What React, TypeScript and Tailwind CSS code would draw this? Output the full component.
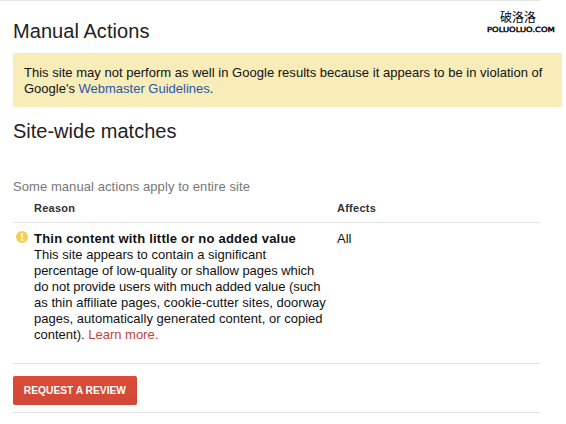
import React from 'react';

const reasonLines = [
  { text: 'This site appears to contain a significant', className: 'tracking-[0.02px]' },
  { text: 'percentage of low-quality or shallow pages which', className: 'tracking-[-0.05px]' },
  { text: 'do not provide users with much added value (such', className: 'tracking-[-0.07px]' },
  { text: 'as thin affiliate pages, cookie-cutter sites, doorway', className: 'tracking-[0.03px]' },
  { text: 'pages, automatically generated content, or copied', className: 'tracking-[0.02px]' },
];

const WarningIcon: React.FC = () => (
  <svg className="mt-[8px] ml-[3px] block h-3 w-3" viewBox="0 0 12 12">
    <circle cx="6" cy="6" r="6" fill="#f9ce55" />
    <path d="M5 2h2v5H5zM5 8h2v2H5z" fill="#fff8e0" />
  </svg>
);

const Watermark: React.FC = () => (
  <div className="absolute top-[10px] left-[487px] w-[71px] text-black">
    <div className="pl-[13px] font-['Noto_Sans_CJK_SC',sans-serif] text-[12px] leading-[14px] whitespace-nowrap">
      破洛洛
    </div>
    <div className="mt-px origin-left scale-x-[1.2] font-['DejaVu_Sans',sans-serif] text-[7px] leading-[10px] font-normal whitespace-nowrap [-webkit-text-stroke:0.4px_black]">
      POLUOLUO.COM
    </div>
  </div>
);

const App: React.FC = () => {
  return (
    <div className="relative h-[424px] w-[566px] overflow-hidden bg-white font-['Liberation_Sans',Arial,sans-serif] text-[13px] leading-4 text-[#111]">
      <div className="h-px w-[540px] bg-[#e5e5e5]" />
      <Watermark />

      <main className="pl-[13px]">
        <h1 className="mt-[18px] text-[20px] leading-6 tracking-[0.06px] text-[#222]">Manual Actions</h1>

        {/* Notice */}
        <div className="mt-[10px] h-[54px] w-[549px] bg-[#f8ecb8] pt-3 pl-[11px] whitespace-nowrap">
          <p className="tracking-[0.02px]">
            This site may not perform as well in Google results because it appears to be in violation of
          </p>
          <p>
            Google's <a className="text-[#2a56a8]">Webmaster Guidelines</a>.
          </p>
        </div>

        <h2 className="mt-3 text-[20px] leading-6 text-[#222]">Site-wide matches</h2>
        <p className="mt-9 tracking-[0.07px] text-[#777]">Some manual actions apply to entire site</p>

        {/* Matches */}
        <div className="flex h-[28px] w-[527px] border-b border-[#e5e5e5] pt-[5px] pl-[21px] text-[11px] font-bold tracking-[0.25px] text-[#333]">
          <span className="w-[303px]">Reason</span>
          <span>Affects</span>
        </div>
        <div className="flex h-[141px] w-[527px] border-b border-[#e5e5e5]">
          <div className="w-[21px]">
            <WarningIcon />
          </div>
          <div className="w-[303px] pt-2 whitespace-nowrap">
            <p className="font-bold tracking-[0.22px]">Thin content with little or no added value</p>
            {reasonLines.map((line) => (
              <p key={line.text} className={line.className}>{line.text}</p>
            ))}
            <p>
              content). <a className="text-[#c5443a]">Learn more.</a>
            </p>
          </div>
          <div className="pt-2">All</div>
        </div>

        <div className="h-[49px] w-[527px] border-b border-[#e5e5e5] pt-3">
          <button className="block h-[29px] w-[124px] rounded-[2px] bg-linear-to-b from-[#dd4b39] to-[#d14836] text-[11px] leading-[29px] font-bold whitespace-nowrap text-white">
            <span className="inline-block scale-x-[0.93]">REQUEST A REVIEW</span>
          </button>
        </div>
      </main>
    </div>
  );
};

export default App;
